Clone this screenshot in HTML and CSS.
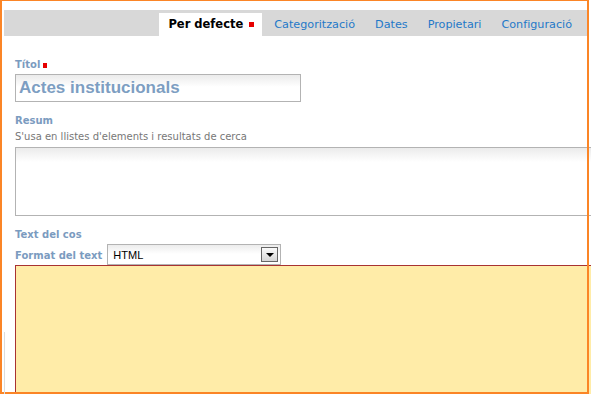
FILE: index.html
```html
<!DOCTYPE html>
<html lang="ca">

<head>
    <meta charset="UTF-8">
    <meta name="viewport" content="width=device-width, initial-scale=1.0">
    <title>Editar element</title>
    <link rel="stylesheet" href="styles.css">
</head>

<body>
    <div class="tabs">
        <span class="tab active">Per defecte<span class="req"></span></span>
        <a href="#" class="tab">Categorització</a>
        <a href="#" class="tab">Dates</a>
        <a href="#" class="tab">Propietari</a>
        <a href="#" class="tab">Configuració</a>
    </div>

    <div class="form">
        <div class="field">
            <label class="label" for="title">Títol<span class="req small"></span></label>
            <input type="text" id="title" class="title-input" value="Actes institucionals">
        </div>

        <div class="field spaced">
            <label class="label" for="summary">Resum</label>
            <div class="hint">S'usa en llistes d'elements i resultats de cerca</div>
            <textarea id="summary" class="summary"></textarea>
        </div>

        <div class="field spaced">
            <span class="label">Text del cos</span>
            <div class="format-row">
                <span class="label">Format del text</span>
                <div class="select">
                    <span>HTML</span>
                    <span class="arrow"></span>
                </div>
            </div>
            <div class="editor"></div>
        </div>
    </div>

    <div class="frame"></div>
</body>

</html>
```

FILE: styles.css
```css
* {
    margin: 0;
    padding: 0;
    box-sizing: border-box;
}

html,
body {
    overflow: hidden;
}

body {
    width: 591px;
    height: 394px;
    font-family: "DejaVu Sans", Verdana, sans-serif;
    background: #fff;
}

/* orange focus frame drawn over the page */
.frame {
    position: fixed;
    left: 0;
    top: 0;
    width: 589px;
    height: 394px;
    border: 2px solid #fb8526;
    border-top-width: 1px;
    pointer-events: none;
}

body::after {
    content: "";
    position: absolute;
    left: 4px;
    top: 332px;
    width: 1px;
    height: 62px;
    background: #dcdcdc;
}

.tabs {
    display: flex;
    justify-content: flex-end;
    align-items: flex-end;
    height: 26px;
    margin: 10px 4px 0 4px;
    padding-right: 5px;
    background: #d8d8d8;
}

.tab {
    padding: 0 10px;
    line-height: 23px;
    font-size: 11.2px;
    color: #1f78c8;
    text-decoration: none;
}

.tab.active {
    display: flex;
    align-items: center;
    margin-right: 2px;
    padding: 0 8px 0 9px;
    background: #fff;
    color: #000;
    font-weight: bold;
    font-size: 11.5px;
}

.req {
    display: inline-block;
    width: 5px;
    height: 5px;
    margin-left: 6px;
    background: #e60000;
}

.req.small {
    width: 4px;
    margin-left: 3px;
}

.form {
    padding: 23px 0 0 15px;
}

.field.spaced {
    margin-top: 13px;
}

.label {
    display: block;
    font-size: 10px;
    line-height: 12px;
    font-weight: bold;
    color: #7b9bbf;
}

.title-input {
    display: block;
    width: 286px;
    height: 28px;
    margin-top: 3px;
    padding: 0 3px;
    border: 1px solid #b3b3b3;
    background: linear-gradient(#ebebeb, #fff 12px);
    font: bold 17px "Liberation Sans", Arial, sans-serif;
    color: #7d9ec2;
    outline: none;
}

.hint {
    margin-top: 4px;
    font-size: 10px;
    line-height: 12px;
    color: #777;
}

.summary {
    display: block;
    width: 576px;
    height: 69px;
    margin-top: 4px;
    border: 1px solid #b3b3b3;
    border-right: none;
    background: linear-gradient(#ebebeb, #fff 14px);
    resize: none;
    outline: none;
}

.format-row {
    display: flex;
    align-items: center;
    margin-top: 3px;
}

.format-row .label {
    padding-top: 2px;
}

.select {
    display: flex;
    align-items: center;
    justify-content: space-between;
    width: 174px;
    height: 21px;
    margin-left: 5px;
    padding: 0 2px 0 5px;
    border: 1px solid #b3b3b3;
    background: linear-gradient(#ececec, #fff 9px);
    font: 11px "Liberation Sans", Arial, sans-serif;
    color: #000;
}

.arrow {
    display: flex;
    align-items: center;
    justify-content: center;
    width: 17px;
    height: 15px;
    border: 1px solid #666;
    background: linear-gradient(#fafafa, #d6d6d6);
}

.arrow::before {
    content: "";
    border-left: 4px solid transparent;
    border-right: 4px solid transparent;
    border-top: 4px solid #000;
}

.editor {
    width: 576px;
    height: 129px;
    border: 1px solid #a83232;
    border-right: none;
    border-bottom: none;
    background: #ffeca8;
}
```
